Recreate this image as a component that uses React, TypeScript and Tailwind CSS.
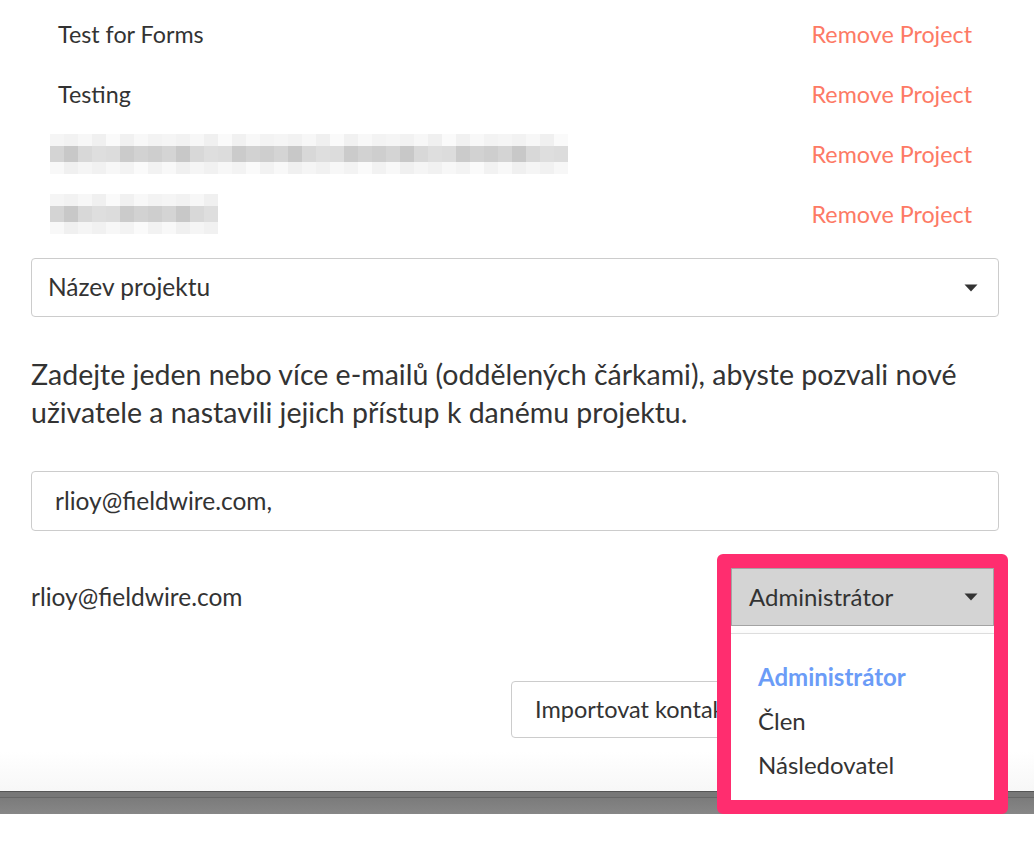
import React from 'react';

const projects = [
  { name: 'Test for Forms', blurred: false },
  { name: 'Testing', blurred: false },
  { name: '', blurred: true, cells: 37 },
  { name: '', blurred: true, cells: 12 },
];

const shadesTop = ['#f5f5f5', '#f0f0f0', '#f8f8f8', '#f2f2f2', '#fafafa', '#f3f3f3', '#f7f7f7', '#f1f1f1'];
const shadesMid = ['#d4d4d4', '#cbcbcb', '#d8d8d8', '#cecece', '#dcdcdc', '#c8c8c8', '#d2d2d2', '#dedede'];

const Blurred: React.FC<{ cells: number }> = ({ cells }) => (
  <div className="flex flex-col">
    <div className="flex">
      {Array.from({ length: cells }).map((_, i) => (
        <div key={i} className="w-[14px] h-[12px]" style={{ backgroundColor: shadesTop[(i * 3) % shadesTop.length] }} />
      ))}
    </div>
    <div className="flex">
      {Array.from({ length: cells }).map((_, i) => (
        <div key={i} className="w-[14px] h-[16px]" style={{ backgroundColor: shadesMid[(i * 5) % shadesMid.length] }} />
      ))}
    </div>
    <div className="flex">
      {Array.from({ length: cells }).map((_, i) => (
        <div key={i} className="w-[14px] h-[12px]" style={{ backgroundColor: shadesTop[(i * 7 + 2) % shadesTop.length] }} />
      ))}
    </div>
  </div>
);

const Caret: React.FC = () => (
  <svg width="14" height="8" viewBox="0 0 14 8" className="shrink-0">
    <path d="M0.5 0.5 H13.5 L7 7.5 Z" fill="#333333" />
  </svg>
);

const App: React.FC = () => {
  return (
    <div className="w-[1034px] h-[856px] bg-white overflow-hidden text-[#333333]" style={{ fontFamily: 'Lato, "Noto Sans", sans-serif' }}>
      <div className="h-[791px] bg-gradient-to-b from-white from-[95%] to-[#f7f7f7] px-[31px] pt-[4px] pr-[35px]">
        <div className="flex flex-col">
          {projects.map((p, i) => (
            <div key={i} className="h-[60px] flex items-center justify-between pl-[27px] pr-[27px] text-[23.3px]">
              {p.blurred ? (
                <div className="-ml-[8px]">
                  <Blurred cells={p.cells || 10} />
                </div>
              ) : (
                <span>{p.name}</span>
              )}
              <span className="text-[#fd7a65]">Remove Project</span>
            </div>
          ))}
        </div>

        <div className="mt-[14px] h-[59px] border border-[#cccccc] rounded-[4px] flex items-center justify-between pl-[16px] pr-[20px] text-[24.5px]">
          <span>Název projektu</span>
          <Caret />
        </div>

        <p className="mt-[38px] text-[28.5px] leading-[38px] pr-[20px]">
          Zadejte jeden nebo více e-mailů (oddělených čárkami), abyste pozvali nové uživatele a nastavili jejich přístup k danému projektu.
        </p>

        <div className="mt-[40px] h-[60px] border border-[#cccccc] rounded-[4px] flex items-center pl-[23px] text-[24.5px]">
          rlioy@fieldwire.com,
        </div>

        <div className="mt-[37px] flex items-center justify-between text-[24px]">
          <span className="text-[24.5px]">rlioy@fieldwire.com</span>
          <div className="relative mr-[5px] z-10">
            <div className="w-[263px] h-[58px] bg-[#d4d4d4] border border-[#a3a3a3] flex items-center justify-between pl-[17px] pr-[15px]">
              <span>Administrátor</span>
              <Caret />
            </div>
            <div className="absolute left-0 top-[65px] w-[263px] h-[167px] bg-white border-t border-[#dddddd] shadow-[0_4px_12px_rgba(0,0,0,0.08)] pt-[21px] pl-[27px] flex flex-col">
              <span className="h-[44px] leading-[44px] font-bold text-[#6b9cf7]">Administrátor</span>
              <span className="h-[44px] leading-[44px]">Člen</span>
              <span className="h-[44px] leading-[44px]">Následovatel</span>
            </div>
            <div className="absolute -left-[14px] -top-[14px] w-[291px] h-[260px] border-[14px] border-[#ff2d6f] rounded-[6px] pointer-events-none" />
          </div>
        </div>

        <div className="mt-[55px] flex justify-end gap-[16px] text-[23.5px]">
          <button className="w-[260px] h-[57px] border border-[#cccccc] rounded-[4px] bg-white text-left pl-[23px] whitespace-nowrap overflow-hidden">
            Importovat kontakty
          </button>
          <button className="w-[212px] h-[57px] rounded-[4px] bg-[#6b9cf7] text-white">
            Pozvat
          </button>
        </div>
      </div>

      <div className="h-[23px] flex flex-col">
        <div className="h-[1px] bg-[#555555]" />
        <div className="h-[5px] bg-[#777777]" />
        <div className="h-[1px] bg-[#666666]" />
        <div className="flex-1 bg-gradient-to-b from-[#7b7b7b] to-[#878787]" />
      </div>
    </div>
  );
};

export default App;
